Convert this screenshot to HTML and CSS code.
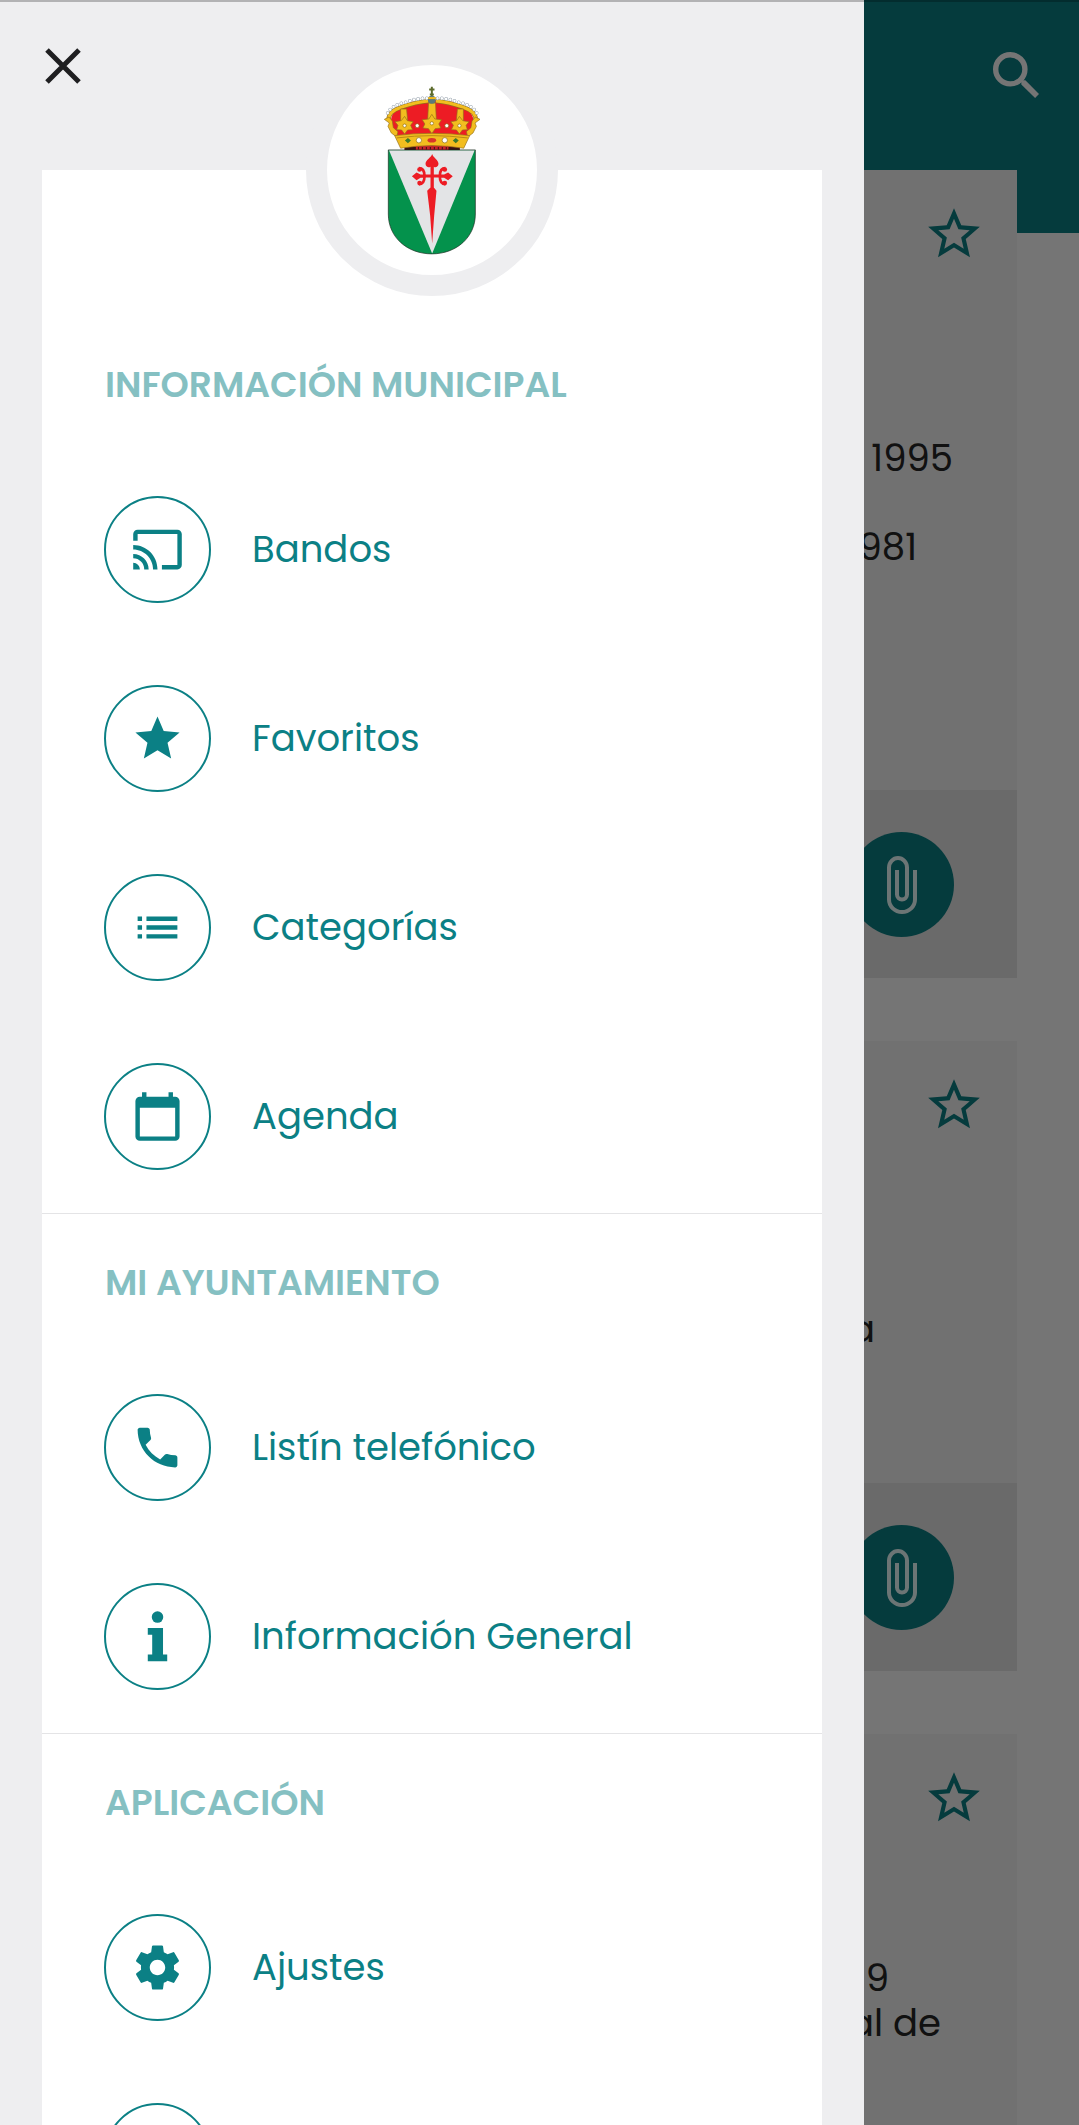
FILE: index.html
```html
<!DOCTYPE html>
<html lang="es">
<head>
<meta charset="utf-8">
<meta name="viewport" content="width=device-width, initial-scale=1">
<title>Bandos</title>
<link rel="stylesheet" href="styles.css">
</head>
<body>
<svg class="sprite" aria-hidden="true">
  <symbol id="star-outline" viewBox="0 0 24 24"><path d="M22 9.24l-7.19-.62L12 2 9.19 8.63 2 9.24l5.46 4.73L5.82 21 12 17.27 18.18 21l-1.63-7.03L22 9.24zM12 15.4l-3.76 2.27 1-4.28-3.32-2.88 4.38-.38L12 6.1l1.71 4.04 4.38.38-3.32 2.88 1 4.28L12 15.4z"/></symbol>
  <symbol id="clip" viewBox="0 0 30 58"><path d="M28 14v29.500a13 12.500 0 0 1-26 0V11.500a9 9.500 0 0 1 18 0v27a5 5 0 0 1-10 0V14" fill="none" stroke="currentColor" stroke-width="4"/></symbol>
</svg>

<main class="page">
  <header class="toolbar">
    <button class="search" aria-label="Buscar">
      <svg viewBox="0 0 48 48"><circle cx="18.300" cy="18.300" r="14.600" fill="none" stroke="currentColor" stroke-width="5.400"/><path d="M29.300 33.500v-2.800l1.600-1.500h2.500L47 43l-3.900 4z"/></svg>
    </button>
  </header>
  <div class="feed">
    <article class="card">
      <div class="card-body tall">
        <button class="fav" aria-label="Favorito"><svg><use href="#star-outline"/></svg></button>
        <p class="text spaced"><span class="end-1">1995</span><span class="end-3">1981</span></p>
      </div>
      <footer class="card-foot"><button class="attach" aria-label="Adjunto"><svg><use href="#clip"/></svg></button></footer>
    </article>
    <article class="card">
      <div class="card-body">
        <button class="fav" aria-label="Favorito"><svg><use href="#star-outline"/></svg></button>
        <p class="text"><span class="end-5">a</span></p>
      </div>
      <footer class="card-foot"><button class="attach" aria-label="Adjunto"><svg><use href="#clip"/></svg></button></footer>
    </article>
    <article class="card">
      <div class="card-body tall">
        <button class="fav" aria-label="Favorito"><svg><use href="#star-outline"/></svg></button>
        <p class="text mid"><span class="end-4">19</span><span class="end-2">al de</span></p>
      </div>
    </article>
  </div>
</main>
<div class="backdrop"></div>

<aside class="drawer">
  <div class="drawer-top">
    <button class="close" aria-label="Cerrar"><svg viewBox="0 0 36 36"><path d="M2 2l32 32M34 2L2 34" fill="none" stroke="currentColor" stroke-width="5"/></svg></button>
  </div>
  <nav class="panel">
    <div class="badge">
      <svg viewBox="252 100 292 515" role="img" aria-label="Escudo">
        <path d="M272 212Q276 150 396 146Q518 150 522 212L502 258H290Z" fill="#ed1c24"/>
        <path d="M314 284Q396 276 480 284V298H314Z" fill="#c8202b"/>
        <path d="M314 285l34 3v10h-34zM480 285l-34 3v10h34z" fill="#3a1212"/>
        <path d="M330 292h132" stroke="#3a1212" stroke-width="8" stroke-dasharray="3 9"/>
        <g fill="none" stroke="#94701a" stroke-width="13"><path d="M266 208Q264 182 300 170Q350 152 386 150"/><path d="M528 208Q530 182 494 170Q444 152 408 150"/></g>
        <g fill="none" stroke="#f2bd1f" stroke-width="9"><path d="M266 208Q264 182 300 170Q350 152 386 150"/><path d="M528 208Q530 182 494 170Q444 152 408 150"/></g>
        <g fill="none" stroke="#8c98a4" stroke-width="11" stroke-linecap="round" stroke-dasharray="0 13"><path d="M263 186Q276 162 316 154Q352 140 386 142"/><path d="M531 186Q518 162 478 154Q442 140 408 142"/></g>
        <g fill="none" stroke="#fff" stroke-width="8" stroke-linecap="round" stroke-dasharray="0 13"><path d="M263 186Q276 162 316 154Q352 140 386 142"/><path d="M531 186Q518 162 478 154Q442 140 408 142"/></g>
        <g fill="#f2bd1f" stroke="#94701a" stroke-width="2" stroke-linejoin="round">
          <path d="M386 156h21l3 60h-27z"/>
          <path d="M302 174h18l4 44h-22zM491 174h-18l-4 44h22z"/>
          <path d="M396 190l9 14 20 2-8 13 6 12-17 2-10 15-10-15-17-2 6-12-8-13 20-2z"/>
          <path d="M314 196l8 13 18 3-8 11 6 13-15 1-9 12-9-12-15-1 4-13-9-11 19-3zM479 196l-8 13-18 3 8 11-6 13 15 1 9 12 9-12 15-1-4-13 9-11-19-3z"/>
          <path d="M253 205l14-7 10 12 3 20 14 12-4 16-16-12-10-20 4-10zM541 205l-14-7-10 12-3 20-14 12 4 16 16-12 10-20-4-10z"/>
          <path d="M284 254Q396 240 510 254L492 292Q396 276 302 292Z"/>
        </g>
        <path d="M290 261Q396 247 504 261" fill="none" stroke="#b98a12" stroke-width="3"/>
        <ellipse cx="396" cy="268" rx="13" ry="7" fill="#d8362a"/>
        <g fill="#fff" stroke="#8a6a10" stroke-width="2"><circle cx="357" cy="268" r="8"/><circle cx="435" cy="268" r="8"/><circle cx="352" cy="224" r="6"/><circle cx="441" cy="224" r="6"/><circle cx="396" cy="217" r="5"/><circle cx="314" cy="224" r="5"/><circle cx="479" cy="224" r="5"/></g>
        <g fill="#3d7a2c"><path d="M315 269l9-8 9 8-9 8zM459 269l9-8 9 8-9 8z"/></g>
        <circle cx="396" cy="146" r="12" fill="#5b7a78"/><path d="M385 138h23v6h-23z" fill="#f2b91d"/>
        <path d="M396 107v28M388 115h16M390 130h12" fill="none" stroke="#5c6b2c" stroke-width="6"/>
        <path d="M265 297H527V490C527 560 470 610 396 610S265 560 265 490Z" fill="#04924c"/>
        <path d="M267 298H525L397 609Z" fill="#e3e4e6"/>
        <path d="M265 297H527V490C527 560 470 610 396 610S265 560 265 490Z" fill="none" stroke="#1b2a20" stroke-width="2"/>
        <g fill="#ed1c24"><path d="M397 309c4 12 19 18 19 30 0 9-9 13-14 9v23h18v9h-18v30l8 10-7 75-6 84-6-84-9-75 10-10v-30h-18v-9h18v-23c-6 4-15 0-15-9 0-12 16-18 20-30z"/><path d="M336 376l14-11 12 6h14v10h-14l-12 7zM459 376l-14-11-12 6h-14v10h14l12 7z"/></g>
        <g fill="none" stroke="#ed1c24" stroke-width="8"><path d="M374 376c0-15-4-24-17-24M374 376c0 15-4 24-17 24M420 376c0-15 4-24 17-24M420 376c0 15 4 24 17 24"/></g>
        <g fill="#ed1c24"><circle cx="359" cy="356" r="7"/><circle cx="359" cy="397" r="7"/><circle cx="435" cy="356" r="7"/><circle cx="435" cy="397" r="7"/></g>
      </svg>
    </div>

    <section class="group">
      <h2>INFORMACIÓN MUNICIPAL</h2>
      <a class="item" href="#bandos"><span class="ring"><svg viewBox="0 0 24 24"><path d="M21 3H3c-1.100 0-2 .9-2 2v3h2V5h18v14h-7v2h7c1.100 0 2-.9 2-2V5c0-1.100-.9-2-2-2zM1 18v3h3c0-1.660-1.340-3-3-3zm0-4v2c2.760 0 5 2.240 5 5h2c0-3.870-3.130-7-7-7zm0-4v2c4.970 0 9 4.030 9 9h2c0-6.080-4.930-11-11-11z"/></svg></span>Bandos</a>
      <a class="item" href="#favoritos"><span class="ring"><svg viewBox="0 0 24 24"><path d="M12 17.270L18.180 21l-1.640-7.030L22 9.240l-7.190-.61L12 2 9.190 8.630 2 9.240l5.460 4.730L5.820 21z"/></svg></span>Favoritos</a>
      <a class="item" href="#categorias"><span class="ring"><svg viewBox="0 0 24 24"><path d="M3 13h2v-2H3v2zm0 4h2v-2H3v2zm0-8h2V7H3v2zm4 4h14v-2H7v2zm0 4h14v-2H7v2zM7 7v2h14V7H7z"/></svg></span>Categorías</a>
      <a class="item" href="#agenda"><span class="ring"><svg viewBox="0 0 24 24"><path d="M20 3h-1V1h-2v2H7V1H5v2H4c-1.100 0-2 .9-2 2v16c0 1.100.9 2 2 2h16c1.100 0 2-.9 2-2V5c0-1.100-.9-2-2-2zm0 18H4V8h16v13z"/></svg></span>Agenda</a>
    </section>
    <section class="group">
      <h2>MI AYUNTAMIENTO</h2>
      <a class="item" href="#listin"><span class="ring"><svg viewBox="0 0 24 24"><path d="M6.620 10.790c1.440 2.830 3.760 5.140 6.590 6.590l2.200-2.200c.27-.27.67-.36 1.020-.24 1.120.37 2.330.57 3.570.57.55 0 1 .45 1 1V20c0 .55-.45 1-1 1-9.390 0-17-7.610-17-17 0-.55.45-1 1-1h3.500c.55 0 1 .45 1 1 0 1.250.2 2.450.57 3.570.11.35.03.74-.25 1.020l-2.200 2.200z"/></svg></span>Listín telefónico</a>
      <a class="item" href="#informacion"><span class="ring"><svg viewBox="0 0 24 24"><circle cx="12" cy="3.200" r="2.600"/><path d="M7.600 8.200h6.900v12h1.900v3H7.600v-3h2v-9h-2z"/></svg></span>Información General</a>
    </section>
    <section class="group">
      <h2>APLICACIÓN</h2>
      <a class="item" href="#ajustes"><span class="ring"><svg viewBox="0 0 24 24"><path d="M19.430 12.980c.04-.32.07-.64.07-.98s-.03-.66-.07-.98l2.110-1.650c.19-.15.24-.42.12-.64l-2-3.460c-.12-.22-.39-.3-.61-.22l-2.490 1c-.52-.4-1.080-.73-1.690-.98l-.38-2.650C14.460 2.180 14.250 2 14 2h-4c-.25 0-.46.18-.49.42l-.38 2.650c-.61.25-1.170.59-1.690.98l-2.490-1c-.23-.09-.49 0-.61.22l-2 3.460c-.13.22-.07.49.12.64l2.110 1.650c-.04.32-.07.65-.07.98s.03.66.07.98l-2.110 1.650c-.19.15-.24.42-.12.64l2 3.460c.12.22.39.3.61.22l2.490-1c.52.4 1.080.73 1.690.98l.38 2.650c.03.24.24.42.49.42h4c.25 0 .46-.18.49-.42l.38-2.650c.61-.25 1.170-.59 1.690-.98l2.490 1c.23.09.49 0 .61-.22l2-3.460c.12-.22.07-.49-.12-.64l-2.110-1.650zM12 15.500c-1.930 0-3.500-1.570-3.500-3.500s1.570-3.500 3.500-3.500 3.500 1.570 3.500 3.500-1.570 3.500-3.500 3.500z"/></svg></span>Ajustes</a>
      <a class="item" href="#mas" aria-label="Más"><span class="ring"></span></a>
    </section>
  </nav>
</aside>
<div class="status-line"></div>
</body>
</html>
```
FILE: styles.css
```css
:root {
  --teal: #0b8085;
  --surface: #eeeef0;
}

* {
  box-sizing: border-box;
}

body {
  margin: 0;
  height: 100vh;
  overflow: hidden;
  background: #fff;
  color: #252525;
  font-family: Poppins, Inter, "Noto Sans", sans-serif;
  font-size: 37px;
  line-height: 45px;
}

button {
  display: block;
  padding: 0;
  border: 0;
  background: none;
  color: inherit;
  font: inherit;
}

svg {
  display: block;
  fill: currentColor;
}

.sprite {
  position: absolute;
  width: 0;
  height: 0;
}

/* Page behind the drawer */

.page {
  height: 100vh;
  overflow: hidden;
}

.toolbar {
  display: flex;
  justify-content: flex-end;
  align-items: flex-start;
  height: 233px;
  padding: 51px 39px;
  background: var(--teal);
  color: #fff;
}

.search svg {
  width: 48px;
  height: 48px;
}

.feed {
  display: grid;
  gap: 63px;
  margin-top: -63px;
  padding: 0 62px;
}

.card {
  background: #f6f6f6;
}

.card-body {
  min-height: 442px;
  padding-top: 33px;
}

.card-body.tall {
  min-height: 620px;
}

.fav {
  margin: 0 32px 0 auto;
  color: var(--teal);
}

.fav svg {
  width: 62px;
  height: 62px;
}

.text {
  display: grid;
  margin: 0;
  padding-top: 171px;
  text-align: right;
}

.text.spaced {
  row-gap: 44px;
}

.text.mid {
  padding-top: 127px;
}

.end-1 { padding-right: 64px; }
.end-2 { padding-right: 76px; }
.end-3 { padding-right: 100px; }
.end-4 { padding-right: 128px; }
.end-5 { padding-right: 142px; }

.card-foot {
  display: flex;
  justify-content: flex-end;
  padding: 42px 63px 41px;
  background: #e6e6e6;
}

.attach {
  display: grid;
  place-items: center;
  width: 105px;
  height: 105px;
  border-radius: 50%;
  background: var(--teal);
  color: #ebffff;
}

.attach svg {
  width: 30px;
  height: 58px;
}

.backdrop {
  position: fixed;
  inset: 0;
  background: rgba(0, 0, 0, 0.54);
}

.status-line {
  position: fixed;
  inset: 0 0 auto;
  height: 2px;
  background: rgba(0, 0, 0, 0.25);
}

/* Drawer */

.drawer {
  position: fixed;
  inset: 0 215px 0 0;
  overflow: hidden;
  padding: 0 42px;
  background: var(--surface);
}

.drawer-top {
  height: 170px;
  padding: 48px 3px;
  color: #1f1f21;
}

.close svg {
  width: 36px;
  height: 36px;
}

.panel {
  display: flow-root;
  min-height: 100vh;
  background: #fff;
}

.badge {
  display: grid;
  place-items: center;
  width: 252px;
  height: 252px;
  margin: -126px auto 20px;
  border: 21px solid var(--surface);
  border-radius: 50%;
  background: #fff;
}

.badge svg {
  width: 97px;
  height: 172px;
}

.group {
  padding-bottom: 2px;
}

.group + .group {
  border-top: 1px solid #e4e4e6;
}

.group h2 {
  margin: 0;
  padding: 46px 63px 48px;
  color: #85c0c2;
  font-size: 36px;
  font-weight: 600;
}

.item {
  display: flex;
  align-items: center;
  gap: 41px;
  height: 189px;
  padding: 0 62px;
  color: var(--teal);
  text-decoration: none;
}

.ring {
  display: grid;
  place-items: center;
  width: 107px;
  height: 107px;
  border: 2px solid;
  border-radius: 50%;
}

.ring svg {
  width: 53px;
  height: 53px;
}
```
